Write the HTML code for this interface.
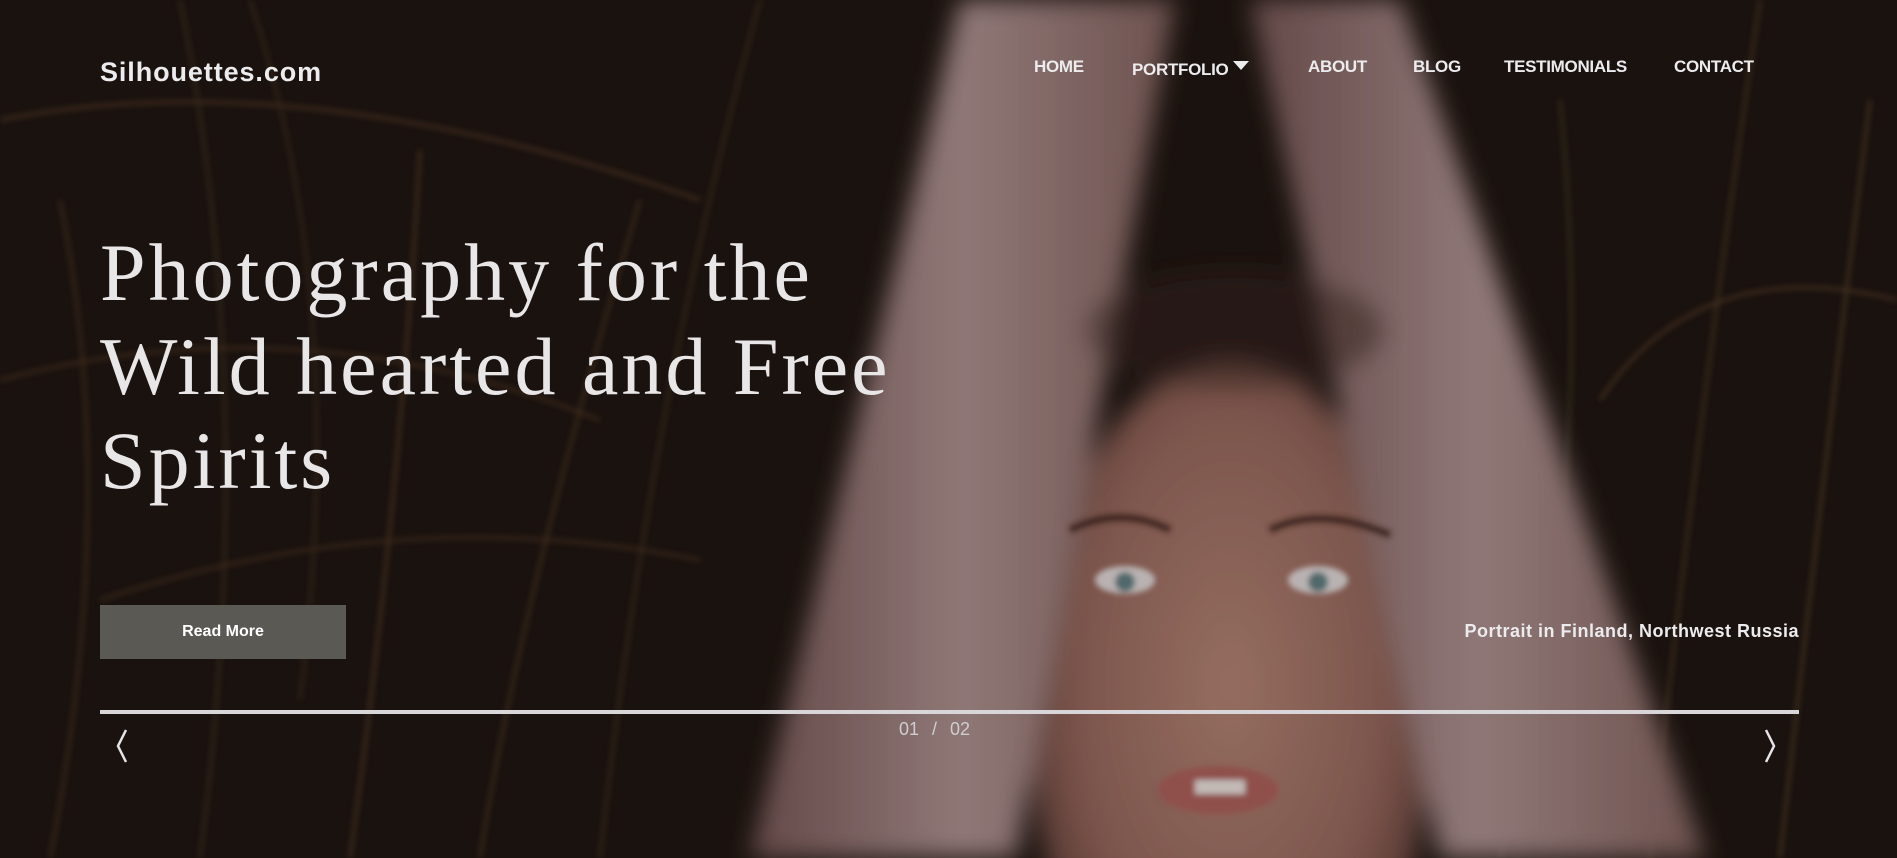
<!DOCTYPE html>
<html><head><meta charset="utf-8"><style>
html,body{margin:0;padding:0;width:1897px;height:858px;overflow:hidden;background:#1a1210;font-family:"Liberation Sans",sans-serif;}
.bg{position:absolute;left:0;top:0;}
.abs{position:absolute;color:#ecebee;white-space:nowrap;}
.logo{left:100px;top:57px;font-size:27px;font-weight:bold;letter-spacing:0.9px;}
.nav{top:57px;font-size:17px;font-weight:bold;letter-spacing:-0.3px;}
h1{position:absolute;left:100px;top:226px;margin:0;font-family:"Liberation Serif",serif;font-weight:normal;font-size:82px;line-height:94px;color:#e9e6e8;letter-spacing:3px;}
.btn{position:absolute;left:100px;top:605px;width:246px;height:54px;background:#5b5954;color:#fff;font-size:16px;font-weight:bold;text-align:center;line-height:54px;}
.line{position:absolute;left:100px;top:710px;width:1699px;height:4px;background:#d8d6d9;}
</style></head><body>
<svg class="bg" width="1897" height="858" viewBox="0 0 1897 858">
<defs>
<filter id="b" x="-20%" y="-20%" width="140%" height="140%"><feGaussianBlur stdDeviation="12"/></filter>
<filter id="b2"><feGaussianBlur stdDeviation="3"/></filter>
<radialGradient id="face" cx="50%" cy="45%" r="55%"><stop offset="0" stop-color="#a77a6c"/><stop offset="0.7" stop-color="#8a5f55"/><stop offset="1" stop-color="#5a3b35"/></radialGradient>
<linearGradient id="arm" x1="0" x2="1"><stop offset="0" stop-color="#6f5250"/><stop offset="0.5" stop-color="#a08685"/><stop offset="1" stop-color="#7a5c58"/></linearGradient>
</defs>
<rect width="1897" height="858" fill="#1e1511"/>
<g filter="url(#b2)" stroke-width="3" fill="none" opacity="0.6">
<path d="M0 120 Q300 60 700 200" stroke="#6b4a2e"/>
<path d="M50 858 Q120 500 60 200" stroke="#5a4029"/>
<path d="M200 858 Q260 400 180 0" stroke="#4c3a26"/>
<path d="M350 858 Q400 500 420 150" stroke="#6a4b2f"/>
<path d="M0 380 Q300 300 600 420" stroke="#5b3f28"/>
<path d="M480 858 Q520 600 640 200" stroke="#5e452b"/>
<path d="M600 858 Q650 400 760 0" stroke="#4d3a24"/>
<path d="M100 600 Q400 500 700 560" stroke="#5a3c26"/>
<path d="M1500 858 Q1600 500 1560 100" stroke="#4a4a2c"/>
<path d="M1650 858 Q1700 400 1760 0" stroke="#5e4a2c"/>
<path d="M1780 858 Q1820 500 1870 100" stroke="#6a5030"/>
<path d="M1897 300 Q1700 250 1600 400" stroke="#6b4c2e"/>
<path d="M250 0 Q350 300 300 700" stroke="#4a3422"/>
</g>
<g filter="url(#b)">
<ellipse cx="1230" cy="720" rx="200" ry="360" fill="url(#face)"/>
<polygon points="960,0 1175,0 1016,858 750,858" fill="url(#arm)"/>
<polygon points="1250,0 1400,0 1706,858 1440,858" fill="url(#arm)"/>
<ellipse cx="1235" cy="330" rx="150" ry="60" fill="#3a2520" opacity="0.5"/>
</g>
<g filter="url(#b2)">
<ellipse cx="1125" cy="580" rx="30" ry="14" fill="#cfc7c7"/>
<ellipse cx="1318" cy="580" rx="30" ry="14" fill="#cfc7c7"/>
<circle cx="1125" cy="582" r="10" fill="#5a7478"/>
<circle cx="1318" cy="582" r="10" fill="#5a7478"/>
<path d="M1070 530 Q1120 505 1170 530" stroke="#3a221c" stroke-width="7" fill="none" opacity="0.8"/>
<path d="M1270 530 Q1320 505 1390 535" stroke="#3a221c" stroke-width="7" fill="none" opacity="0.8"/>
<ellipse cx="1218" cy="790" rx="60" ry="24" fill="#a05a55"/>
<rect x="1195" y="780" width="50" height="14" fill="#d8cfcc"/>
</g>
<rect width="1897" height="858" fill="#000" opacity="0.1"/>
</svg>
<div class="abs logo">Silhouettes.com</div>
<div class="abs nav" style="left:1034px">HOME</div>
<div class="abs nav" style="left:1132px;top:60px">PORTFOLIO</div>
<svg style="position:absolute;left:1233px;top:61px" width="16" height="10"><polygon points="0,0 16,0 8,9" fill="#ecebee"/></svg>
<div class="abs nav" style="left:1308px">ABOUT</div>
<div class="abs nav" style="left:1413px">BLOG</div>
<div class="abs nav" style="left:1504px">TESTIMONIALS</div>
<div class="abs nav" style="left:1674px">CONTACT</div>
<h1>Photography for the<br>Wild hearted and Free<br>Spirits</h1>
<div class="btn">Read More</div>
<div class="abs" style="right:98px;top:621px;font-size:18px;font-weight:bold;letter-spacing:0.5px">Portrait in Finland, Northwest Russia</div>
<div class="line"></div>
<div class="abs" style="left:899px;top:719px;font-size:18px;color:#cfcdd0;word-spacing:8px">01 / 02</div>
<svg style="position:absolute;left:114px;top:728px" width="16" height="36"><polyline points="12,2 4,18 12,34" fill="none" stroke="#e6e4ea" stroke-width="2.5"/></svg>
<svg style="position:absolute;left:1762px;top:728px" width="16" height="36"><polyline points="4,2 12,18 4,34" fill="none" stroke="#e6e4ea" stroke-width="2.5"/></svg>
</body></html>
